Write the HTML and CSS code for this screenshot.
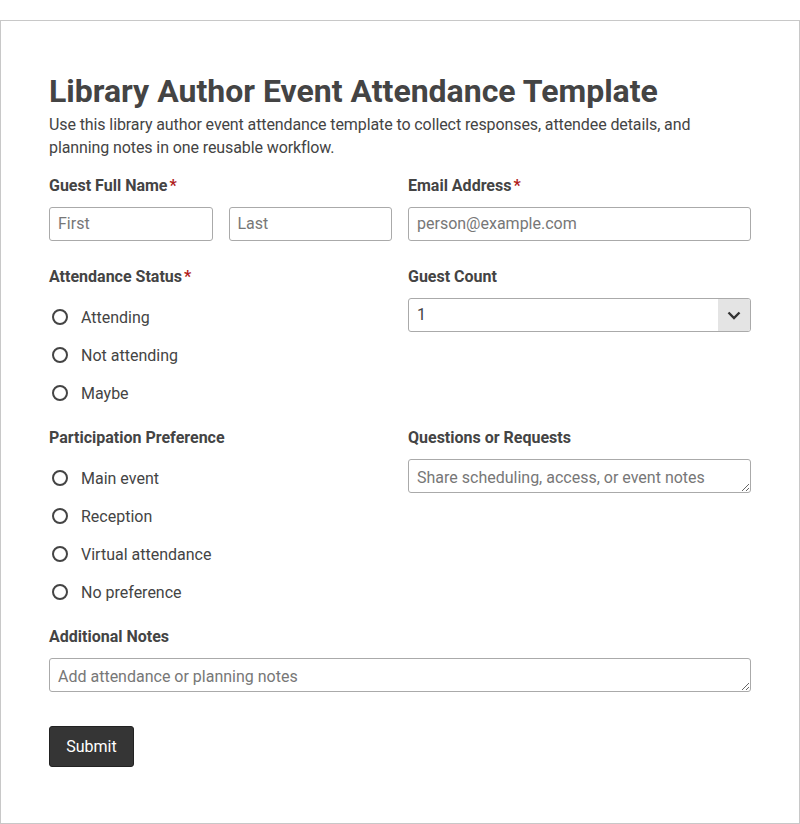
FILE: index.html
```html
<!DOCTYPE html>
<html lang="en">
<head>
<meta charset="utf-8">
<title>Library Author Event Attendance Template</title>
<link rel="stylesheet" href="styles.css">
</head>
<body>
<form class="card">
  <h1 class="title">Library Author Event Attendance Template</h1>
  <p class="desc">Use this library author event attendance template to collect responses, attendee details, and planning notes in one reusable workflow.</p>

  <div class="grid">
    <div class="field">
      <div class="label">Guest Full Name<span class="req">*</span></div>
      <div class="name-row">
        <input class="input" type="text" placeholder="First">
        <input class="input" type="text" placeholder="Last">
      </div>
    </div>
    <div class="field">
      <div class="label">Email Address<span class="req">*</span></div>
      <input class="input" type="email" placeholder="person@example.com">
    </div>

    <div class="field field-radio">
      <div class="label">Attendance Status<span class="req">*</span></div>
      <div class="radios">
        <label class="radio"><span class="dot"></span>Attending</label>
        <label class="radio"><span class="dot"></span>Not attending</label>
        <label class="radio"><span class="dot"></span>Maybe</label>
      </div>
    </div>
    <div class="field">
      <div class="label">Guest Count</div>
      <div class="select">
        <span class="select-value">1</span>
        <span class="select-arrow">
          <svg width="14" height="9" viewBox="0 0 14 9"><path d="M1.5 1.5 L7 7 L12.5 1.5" fill="none" stroke="#333" stroke-width="2.4"/></svg>
        </span>
      </div>
    </div>

    <div class="field field-radio">
      <div class="label">Participation Preference</div>
      <div class="radios">
        <label class="radio"><span class="dot"></span>Main event</label>
        <label class="radio"><span class="dot"></span>Reception</label>
        <label class="radio"><span class="dot"></span>Virtual attendance</label>
        <label class="radio"><span class="dot"></span>No preference</label>
      </div>
    </div>
    <div class="field">
      <div class="label">Questions or Requests</div>
      <textarea class="input textarea" rows="1" placeholder="Share scheduling, access, or event notes"></textarea>
    </div>

    <div class="field field-full">
      <div class="label">Additional Notes</div>
      <textarea class="input textarea" rows="1" placeholder="Add attendance or planning notes"></textarea>
    </div>
  </div>

  <button class="submit" type="button">Submit</button>
</form>
</body>
</html>
```
FILE: styles.css
```css
html, body {
  margin: 0;
  padding: 0;
  background: #fff;
}
body {
  font-family: Roboto, "Liberation Sans", Arial, sans-serif;
  color: #444;
  font-size: 16px;
  padding-top: 20px;
}
.card {
  box-sizing: border-box;
  width: 800px;
  height: 804px;
  border: 1px solid #c8c8c8;
  padding: 49px 48px 48px;
}
.title {
  margin: 0;
  font-size: 32px;
  line-height: 42px;
  font-weight: 700;
  color: #444;
}
.desc {
  margin: 1px 0 15px;
  line-height: 23px;
  letter-spacing: -0.1px;
  color: #444;
}
.grid {
  display: grid;
  grid-template-columns: 1fr 1fr;
  column-gap: 16px;
}
.field {
  padding-bottom: 24px;
  min-width: 0;
}
.field-radio {
  padding-bottom: 14px;
}
.field-full {
  grid-column: 1 / -1;
  padding-bottom: 34px;
}
.label {
  font-weight: 700;
  line-height: 22px;
  padding-top: 1px;
  margin-bottom: 10px;
  color: #444;
}
.req {
  color: #b01c1c;
  margin-left: 2px;
}
.name-row {
  display: flex;
  gap: 16px;
}
.input {
  box-sizing: border-box;
  display: block;
  width: 100%;
  height: 34px;
  border: 1px solid #aaa;
  border-radius: 3px;
  padding: 0 8px 2px;
  font-family: inherit;
  font-size: 16px;
  color: #444;
  background: #fff;
  margin: 0;
}
.name-row .input {
  flex: 1;
  min-width: 0;
}
.input::placeholder {
  color: #777;
}
.textarea {
  padding: 8px 8px 4px;
  line-height: 20px;
  resize: vertical;
  min-height: 34px;
}
.select {
  box-sizing: border-box;
  display: flex;
  height: 34px;
  border: 1px solid #aaa;
  border-radius: 3px;
  overflow: hidden;
}
.select-value {
  flex: 1;
  padding: 0 8px;
  line-height: 32px;
  color: #444;
}
.select-arrow {
  width: 32px;
  background: #e4e4e4;
  display: flex;
  align-items: center;
  justify-content: center;
}
.radios {
  display: flex;
  flex-direction: column;
}
.radio {
  display: flex;
  align-items: center;
  height: 38px;
  color: #444;
}
.dot {
  box-sizing: border-box;
  width: 16px;
  height: 16px;
  border: 2px solid #444;
  border-radius: 50%;
  margin-left: 3px;
  margin-right: 13px;
  flex: none;
}
.submit {
  display: block;
  box-sizing: border-box;
  width: 85px;
  height: 41px;
  padding: 0;
  background: #353535;
  color: #fff;
  border: 1px solid #222;
  border-radius: 3px;
  font-family: inherit;
  font-size: 16px;
}
```
